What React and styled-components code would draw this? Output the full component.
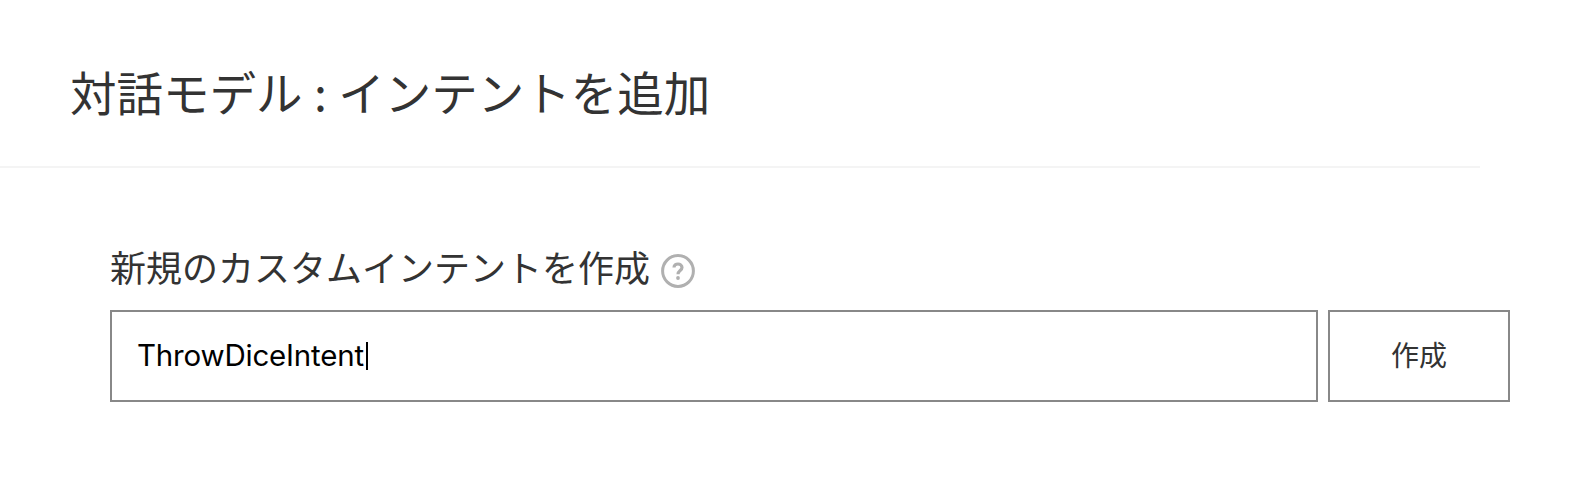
import React from "react";
import styled, { createGlobalStyle } from "styled-components";

const GlobalStyle = createGlobalStyle`
  *, *::before, *::after { box-sizing: border-box; }
  body {
    margin: 0;
    background: #fff;
    color: #333;
    font-family: "Noto Sans CJK JP", sans-serif;
  }
`;

const Page = styled.main`
  width: 1580px;
  height: 492px;
  overflow: hidden;
  background: #fff;
`;

const Header = styled.header`
  width: 1480px;
  height: 168px;
  padding: 58px 0 0 70px;
  border-bottom: 2px solid #f4f4f4;
`;

const Title = styled.h1`
  margin: 0;
  font-size: 46.5px;
  line-height: 66px;
  font-weight: 400;
  word-spacing: 1px;
  white-space: nowrap;
`;

const Form = styled.section`
  display: flex;
  flex-direction: column;
  padding: 71px 70px 0 110px;
`;

const LabelRow = styled.div`
  display: flex;
  align-items: center;
  gap: 11px;
  height: 54px;
`;

const Label = styled.span`
  font-size: 36px;
  line-height: 54px;
  white-space: nowrap;
`;

const HelpIcon = styled.svg`
  width: 34px;
  height: 34px;
  margin-top: 10px;
`;

const Fields = styled.div`
  display: flex;
  gap: 10px;
  margin-top: 17px;
`;

const Field = styled.div`
  display: flex;
  align-items: center;
  width: 1208px;
  height: 92px;
  padding: 0 0 0 25px;
  border: 2px solid #888;
  color: #000;
`;

const Value = styled.span`
  width: 229px;
  font-family: "Inter", sans-serif;
  font-size: 29.5px;
  font-weight: 400;
  letter-spacing: -0.2px;
  line-height: 40px;
  padding-bottom: 2px;
`;

const Caret = styled.span`
  width: 2px;
  height: 28px;
  background: #000;
`;

const CreateButton = styled.button`
  width: 182px;
  height: 92px;
  padding: 0 0 4px;
  border: 2px solid #888;
  background: #fff;
  color: #333;
  font: 28px/40px "Noto Sans CJK JP", sans-serif;
`;

export default function App() {
  return (
    <Page>
      <GlobalStyle />
      <Header>
        <Title>対話モデル : インテントを追加</Title>
      </Header>
      <Form>
        <LabelRow>
          <Label>新規のカスタムインテントを作成</Label>
          <HelpIcon viewBox="0 0 34 34" fill="none" stroke="#b0b0b0">
            <circle cx="17" cy="17" r="15.4" strokeWidth="3" />
            <path d="M13 13.6C13 8.7 21 8.9 21 13.5C21 16.5 17 16.5 17 20.3" strokeWidth="3.2" />
            <circle cx="17" cy="24" r="1.9" fill="#b0b0b0" stroke="none" />
          </HelpIcon>
        </LabelRow>
        <Fields>
          <Field>
            <Value>ThrowDiceIntent</Value>
            <Caret />
          </Field>
          <CreateButton type="button">作成</CreateButton>
        </Fields>
      </Form>
    </Page>
  );
}
